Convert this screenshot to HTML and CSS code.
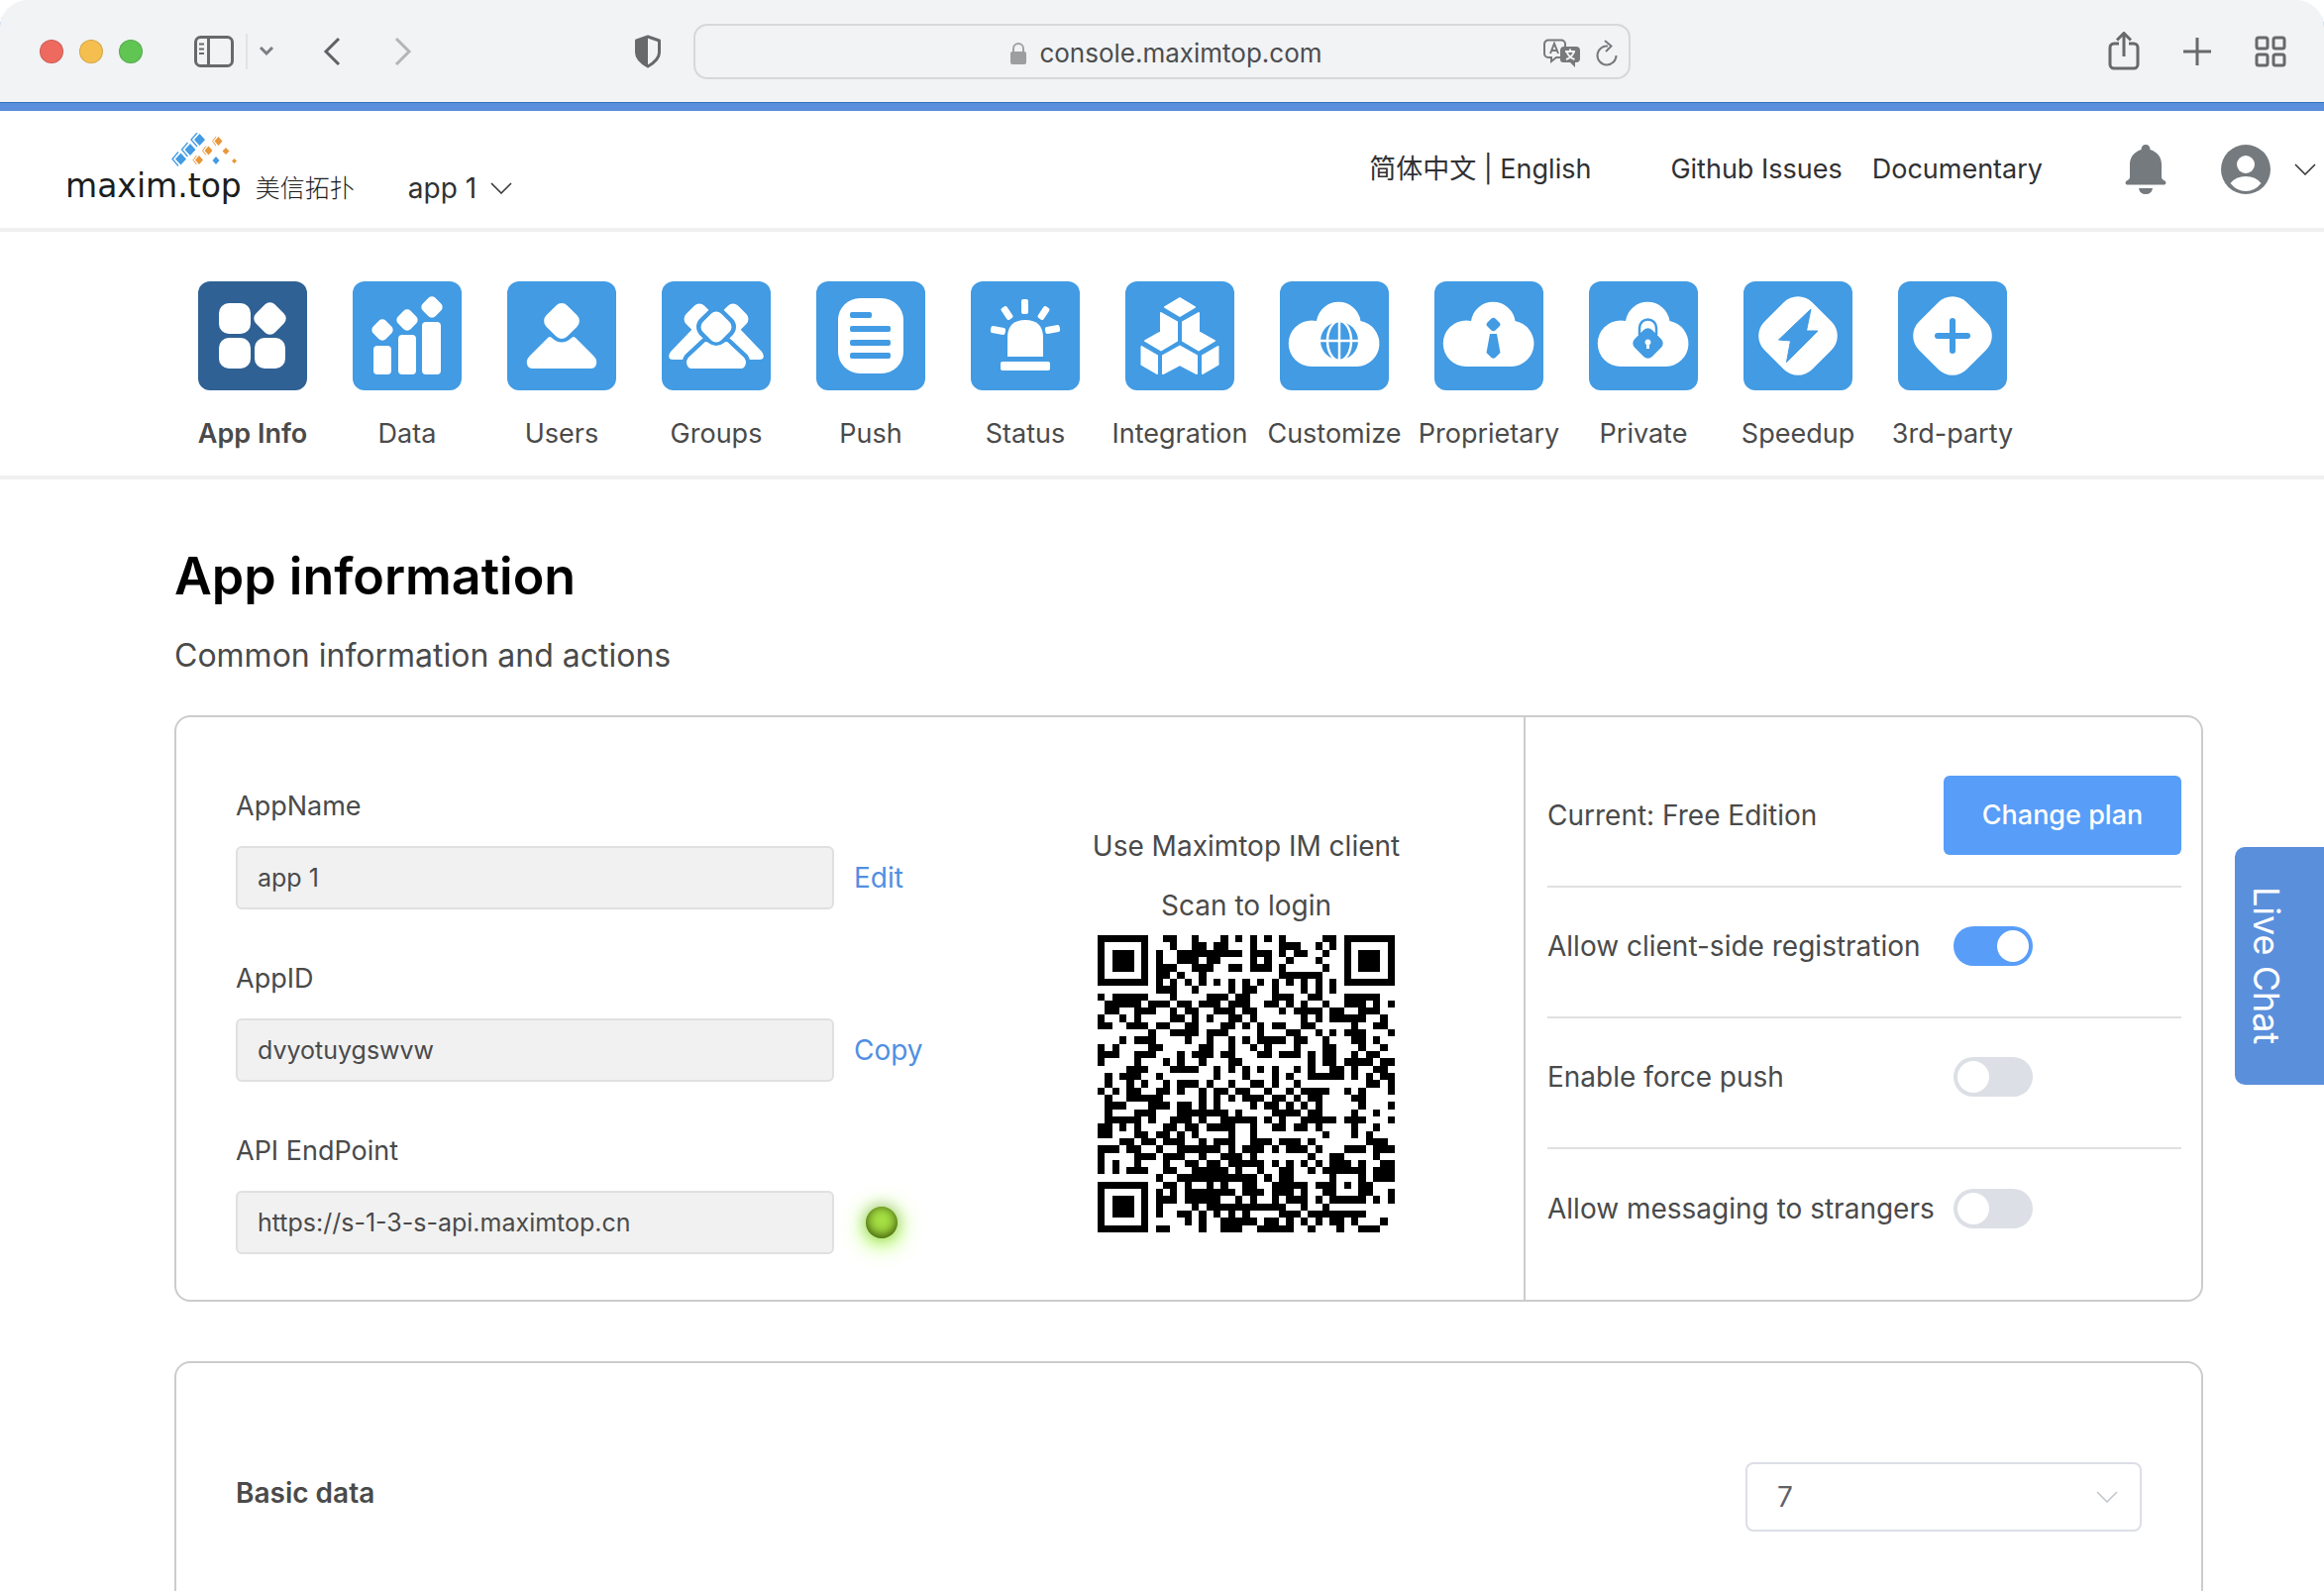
FILE: index.html
```html
<!DOCTYPE html>
<html lang="en">
<head>
<meta charset="utf-8">
<title>App information</title>
<link rel="stylesheet" href="styles.css">
</head>
<body>
<svg class="defs" aria-hidden="true">
  <symbol id="chevron" viewBox="0 0 22 12"><path d="M1 1l10 10L21 1" fill="none" stroke="currentColor" stroke-width="1.500"/></symbol>
  <symbol id="cloud" viewBox="0 0 110 110"><path fill="#fff" d="M32 86a23 23 0 0 1 0-46.500q3 0 5 .5a22.500 22.500 0 0 1 44.500 0a23.200 23.200 0 0 1-3.500 46z"/></symbol>
</svg>

<div class="chrome">
  <div class="chrome-left">
    <div class="lights"><i class="light red"></i><i class="light yellow"></i><i class="light green"></i></div>
    <button class="tool sidebar-btn" aria-label="Sidebar"><svg width="40" height="32" viewBox="0 0 40 32" fill="none" stroke="#67696b" stroke-width="3"><rect x="1.500" y="1.500" width="37" height="29" rx="5"/><path d="M14.500 2v28"/><path d="M5 8.500h5M5 13.500h5M5 18h5" stroke-width="2"/></svg></button>
    <button class="tool drop-btn" aria-label="Tab groups"><svg width="14" height="10" viewBox="0 0 14 10" fill="none" stroke="#7b7d80" stroke-width="3"><path d="M1 1l6 6 6-6"/></svg></button>
    <button class="tool back-btn" aria-label="Back"><svg width="18" height="30" viewBox="0 0 18 30" fill="none" stroke="#5f6163" stroke-width="3"><path d="M16 2L3 15l13 13"/></svg></button>
    <button class="tool" aria-label="Forward"><svg width="18" height="30" viewBox="0 0 18 30" fill="none" stroke="#b3b5b7" stroke-width="3"><path d="M2 2l13 13L2 28"/></svg></button>
    <button class="tool shield-btn" aria-label="Privacy report"><svg width="28" height="34" viewBox="0 0 28 34"><path d="M14 2L25.500 6V18c0 6-4.500 10-11.500 14C7 28 2.500 24 2.500 18V6z" fill="none" stroke="#67696b" stroke-width="3" stroke-linejoin="round"/><path d="M14 2v30C7 28 2.500 24 2.500 18V6z" fill="#67696b"/></svg></button>
  </div>
  <div class="url">
    <svg width="18" height="24" viewBox="0 0 18 24"><path d="M4 11V7a5 5 0 0 1 10 0v4" fill="none" stroke="#a0a2a4" stroke-width="2"/><rect x="1" y="10" width="16" height="13" rx="2" fill="#9c9ea0"/></svg>
    <span>console.maximtop.com</span>
    <div class="url-tools">
      <svg width="38" height="30" viewBox="0 0 38 30"><path d="M5 1.500h13a4 4 0 0 1 4 4V9M18 19h-5l-5 4v-4H5a4 4 0 0 1-4-4V5.500a4 4 0 0 1 4-4" fill="none" stroke="#77797b" stroke-width="2"/><path d="M7 15l4-10 4 10M8.500 12h5" fill="none" stroke="#77797b" stroke-width="2"/><path d="M20 8h13a4 4 0 0 1 4 4v8a4 4 0 0 1-4 4h-1v5l-5-5h-7a3 3 0 0 1-3-3V12a4 4 0 0 1 3-4z" fill="#77797b"/><path d="M22 13h10M27 10.500V13M31 13q-2 6-8 8M23.500 13q2 6 8 8" fill="none" stroke="#f1f3f5" stroke-width="2"/></svg>
      <svg width="24" height="28" viewBox="0 0 24 28" fill="none" stroke="#77797b" stroke-width="2"><path d="M13 6.500A9.500 9.500 0 1 0 21.500 16M10 1l6.500 5.500L11 12"/></svg>
    </div>
  </div>
  <div class="chrome-right">
    <button class="tool" aria-label="Share"><svg width="32" height="40" viewBox="0 0 32 40" fill="none" stroke="#67696b" stroke-width="3"><path d="M11 12H6a4 4 0 0 0-4 4v17a4 4 0 0 0 4 4h20a4 4 0 0 0 4-4V16a4 4 0 0 0-4-4h-5M16 25V2M9 8.500L16 1.500l7 7"/></svg></button>
    <button class="tool" aria-label="New tab"><svg width="28" height="28" viewBox="0 0 28 28" stroke="#67696b" stroke-width="3"><path d="M14 0v28M0 14h28"/></svg></button>
    <button class="tool" aria-label="Tab overview"><svg width="32" height="32" viewBox="0 0 32 32" fill="none" stroke="#67696b" stroke-width="3"><rect x="2" y="2" width="11" height="11" rx="2"/><rect x="19" y="2" width="11" height="11" rx="2"/><rect x="2" y="19" width="11" height="11" rx="2"/><rect x="19" y="19" width="11" height="11" rx="2"/></svg></button>
  </div>
</div>

<header class="header">
  <a class="logo" href="#">
    <svg class="logo-mark" width="72" height="34" viewBox="0 0 72 34">
      <g fill="#429be3"><path d="M29.500 1l5.500 6-5.500 6-5.500-6zM20 11l5.500 6-5.500 6-5.500-6zM10.500 20.500l5.500 6-5.500 6-5.500-6zM46 24l3.500 4-3.500 4-3.500-4z"/></g>
      <g fill="none" stroke="#429be3" stroke-width="1.300"><path d="M27 0l-6 7 6 7M17.500 10l-6 7 6 7M8 19.500l-6 7 6 7"/></g>
      <g fill="#e8973a"><path d="M48.500 4l4 4.500-4 4.500-4-4.500zM38.500 13.500l4 4.500-4 4.500-4-4.500zM29 23l4 4.500-4 4.500-4-4.500zM56 15l3.500 3.500L56 22l-3.500-3.500zM64.500 26l2.500 2.500-2.500 2.500-2.500-2.500z"/></g>
      <g fill="none" stroke="#e8973a"><path d="M46 4l-3.500 4.500L46 13M36 13.500L32.500 18l3.500 4.500M26.500 23L23 27.500l3.500 4.500"/></g>
    </svg>
    <span class="logo-name">maxim.top</span>
    <span class="logo-cn" lang="zh">美信拓扑</span>
  </a>
  <button class="app-switch">app 1<svg width="22" height="12"><use href="#chevron"/></svg></button>
  <nav class="header-links">
    <span class="langs"><a href="#" lang="zh">简体中文</a> | <a href="#">English</a></span>
    <a href="#">Github Issues</a>
    <a class="doc" href="#">Documentary</a>
    <button class="plain bell" aria-label="Notifications"><svg width="44" height="50" viewBox="0 0 44 50" fill="#757a7e"><path d="M22 0c3 0 4.500 2 4.500 5C34 7.500 38 13 38 20v13q0 2 4 4 1 3-1 3.500H3q-2-.5-1-3.500 4-2 4-4V20C6 13 10 7.500 17.500 5c0-3 1.500-5 4.500-5zM15 44h14q-1 6-7 6t-7-6z"/></svg></button>
    <button class="plain account" aria-label="Account"><svg width="50" height="50" viewBox="0 0 50 50"><circle cx="25" cy="25" r="25" fill="#757a7e"/><circle cx="25" cy="20" r="9" fill="#fff"/><path d="M9.500 39Q15 32 25 32t15.500 7Q34 47 25 47T9.500 39z" fill="#fff"/></svg><svg width="22" height="12"><use href="#chevron"/></svg></button>
  </nav>
</header>

<nav class="modules">
  <a class="module active" href="#"><svg viewBox="0 0 110 110" fill="#fff"><rect x="21" y="22" width="32" height="31" rx="10"/><rect x="21" y="57" width="32" height="31" rx="10"/><rect x="57" y="57" width="31" height="31" rx="10"/><rect x="59" y="24" width="27" height="27" rx="7" transform="rotate(45 72.500 37.500)"/></svg><span>App Info</span></a>
  <a class="module" href="#"><svg viewBox="0 0 110 110" fill="#fff"><rect x="21" y="65" width="18" height="29" rx="4"/><rect x="46" y="54" width="18" height="40" rx="4"/><rect x="70" y="41" width="19" height="53" rx="4"/><rect x="21" y="40" width="18" height="18" rx="5" transform="rotate(45 30 49)"/><rect x="46" y="30" width="18" height="18" rx="5" transform="rotate(45 55 39)"/><rect x="71" y="17" width="18" height="18" rx="5" transform="rotate(45 80 26)"/></svg><span>Data</span></a>
  <a class="module" href="#"><svg viewBox="0 0 110 110" fill="#fff"><rect x="40" y="25" width="30" height="30" rx="8" transform="rotate(45 55 40)"/><path d="M41 57q2-2 4 0 10 9 20 0 2-2 4 0l18.500 18.500q3.500 4 2.500 8-1 4.500-6 4.500H26q-5 0-6-4.500-1-4 2.500-8z"/></svg><span>Users</span></a>
  <a class="module" href="#"><svg viewBox="0 0 110 110" fill="#fff"><path d="M31 48L9 71q-3 4-1 7 1 1 4 1h33l15-29zM79 48l22 23q3 4 1 7-1 1-4 1H65L50 50z"/><rect x="25" y="25" width="26" height="26" rx="7" transform="rotate(45 38 38)"/><rect x="59" y="25" width="26" height="26" rx="7" transform="rotate(45 72 38)"/><g stroke="#429be3" stroke-width="9" paint-order="stroke"><path d="M43 62q2-2 4 0 8 6 16 0 2-2 4 0l16 15q3 4 1 8-1 3-5 3H31q-4 0-5-3-2-4 1-8z"/><rect x="42" y="33" width="26" height="26" rx="7" transform="rotate(45 55 46)"/></g><path d="M43 62q2-2 4 0 8 6 16 0 2-2 4 0l16 15q3 4 1 8-1 3-5 3H31q-4 0-5-3-2-4 1-8z"/></svg><span>Groups</span></a>
  <a class="module" href="#"><svg viewBox="0 0 110 110" fill="#fff"><rect x="22" y="17" width="66" height="76" rx="22"/><g fill="#429be3"><rect x="34" y="31" width="22" height="6" rx="2"/><rect x="34" y="45" width="41" height="6" rx="2"/><rect x="34" y="59" width="41" height="6" rx="2"/><rect x="34" y="72" width="41" height="6" rx="2"/></g></svg><span>Push</span></a>
  <a class="module" href="#"><svg viewBox="0 0 110 110" fill="#fff"><rect x="30" y="81" width="50" height="9" rx="2"/><path d="M37 76V57q0-18 18-18t18 18v19z"/><rect x="51" y="18" width="7" height="15" rx="2"/><rect x="33" y="25" width="7" height="14" rx="2" transform="rotate(-33 36.500 32)"/><rect x="70" y="25" width="7" height="14" rx="2" transform="rotate(33 73.500 32)"/><rect x="20" y="46" width="15" height="7" rx="2" transform="rotate(10 27.500 49.500)"/><rect x="75" y="45" width="15" height="7" rx="2" transform="rotate(-10 82.500 48.500)"/></svg><span>Status</span></a>
  <a class="module" href="#"><svg viewBox="0 0 110 110" fill="#fff" stroke="#fff" stroke-width="2" stroke-linejoin="round"><path d="M55 17l15 9-15 9-15-9zM36 32l16 9v19l-16 9.500L20 60l16-9zM74 32l-16 9v19l16 9.500L90 60l-16-9zM16.500 66L32 75v18l-15.500-9zM93.500 66L78 75v18l15.500-9zM38 75l17-9.500L72 75v18l-17-9-17 9z"/></svg><span>Integration</span></a>
  <a class="module" href="#"><svg viewBox="0 0 110 110"><use href="#cloud"/><circle cx="60" cy="60" r="19" fill="#429be3"/><g fill="none" stroke="#fff" stroke-width="2.500"><ellipse cx="60" cy="60" rx="12" ry="20"/><path d="M60 40v40M40 60h40"/></g></svg><span>Customize</span></a>
  <a class="module" href="#"><svg viewBox="0 0 110 110"><use href="#cloud"/><path fill="#429be3" d="M57.500 37.500q2-1.500 4 0l4 4q2 2 0 4l-4 4q-2 1.500-4 0l-4-4q-2-2 0-4zM56 53h7l3.500 19-5 5q-2 1.500-4 0l-5-5z"/></svg><span>Proprietary</span></a>
  <a class="module" href="#"><svg viewBox="0 0 110 110"><use href="#cloud"/><path fill="none" stroke="#429be3" stroke-width="2.500" d="M51 54v-7a8.500 8.500 0 0 1 17 0v7"/><rect x="47" y="50" width="25" height="25" rx="6" transform="rotate(45 59.500 62.500)" fill="#429be3"/><path fill="#fff" d="M58 64a3 3 0 1 1 3 0v4h-3z"/></svg><span>Private</span></a>
  <a class="module" href="#"><svg viewBox="0 0 110 110"><rect x="21" y="21" width="68" height="68" rx="20" transform="rotate(45 55 55)" fill="#fff"/><path fill="#429be3" stroke="#429be3" stroke-linejoin="round" d="M68 28l-4.500 22H75L43.500 81.500 47.500 60 35.500 59z"/></svg><span>Speedup</span></a>
  <a class="module" href="#"><svg viewBox="0 0 110 110"><rect x="21" y="21" width="68" height="68" rx="20" transform="rotate(45 55 55)" fill="#fff"/><path stroke="#429be3" stroke-width="6" stroke-linecap="round" d="M55 40v30M40 55h30"/></svg><span>3rd-party</span></a>
</nav>

<main class="content">
  <h1>App information</h1>
  <p class="lead">Common information and actions</p>

  <section class="card info">
    <div class="fields">
      <div class="field">
        <label for="app-name">AppName</label>
        <div class="field-row"><input id="app-name" type="text" value="app 1" readonly><a href="#">Edit</a></div>
      </div>
      <div class="field">
        <label for="app-id">AppID</label>
        <div class="field-row"><input id="app-id" type="text" value="dvyotuygswvw" readonly><a href="#">Copy</a></div>
      </div>
      <div class="field">
        <label for="endpoint">API EndPoint</label>
        <div class="field-row"><input id="endpoint" type="text" value="https://s-1-3-s-api.maximtop.cn" readonly><i class="status-dot"></i></div>
      </div>
    </div>
    <div class="scan">
      <p>Use Maximtop IM client</p>
      <p>Scan to login</p>
      <svg class="qr" viewBox="0 0 41 41" shape-rendering="crispEdges" role="img" aria-label="Login QR code"><path id="qr-path"/></svg>
    </div>
    <div class="settings">
      <div class="setting plan"><span>Current: Free Edition</span><button class="primary">Change plan</button></div>
      <div class="setting"><label for="reg">Allow client-side registration</label><input class="switch" id="reg" type="checkbox" checked></div>
      <div class="setting"><label for="force">Enable force push</label><input class="switch" id="force" type="checkbox"></div>
      <div class="setting"><label for="strangers">Allow messaging to strangers</label><input class="switch" id="strangers" type="checkbox"></div>
    </div>
  </section>

  <section class="card basic">
    <label for="days">Basic data</label>
    <div class="select-wrap">
      <select id="days"><option>7</option><option>15</option><option>30</option></select>
      <svg width="22" height="12"><use href="#chevron"/></svg>
    </div>
  </section>
</main>

<button class="live-chat">Live Chat</button>
<script src="qr.js"></script>
</body>
</html>
```

FILE: styles.css
```css
* { box-sizing: border-box; }

html { background: #fff; }

body {
  margin: 0;
  height: 100vh;
  overflow: hidden;
  font-family: Inter, "Noto Sans CJK SC", sans-serif;
  font-size: 28px;
  line-height: 40px;
  color: #4a4a4a;
}

button, input, select { font: inherit; color: inherit; }
button { padding: 0; border: 0; background: none; display: flex; align-items: center; cursor: pointer; }
a { color: inherit; text-decoration: none; }
svg { display: block; flex: none; }
p, h1 { margin: 0; }
.defs { display: none; }

/* Browser toolbar */
.chrome {
  display: grid;
  grid-template-columns: minmax(0, 1fr) minmax(0, 946px) minmax(0, 1fr);
  align-items: center;
  height: 112px;
  background: #f1f3f5;
  border-bottom: 8px solid #5a8fdc;
  border-radius: 28px 28px 0 0;
  box-shadow: inset 0 -1px #2f6fbd;
}
.chrome-left { display: flex; align-items: center; padding: 0 32px 0 40px; }
.lights { display: flex; gap: 16px; }
.light { width: 24px; height: 24px; border-radius: 50%; border: 1px solid #0002; }
.red { background: #ee6a5f; }
.yellow { background: #f5bf4f; }
.green { background: #61c554; }
.sidebar-btn { margin-left: 52px; }
.drop-btn { margin-left: 12px; padding-left: 12px; height: 36px; border-left: 2px solid #e1e3e5; }
.back-btn { margin: 0 54px 0 50px; }
.shield-btn { margin-left: auto; }
.url {
  display: flex;
  align-items: center;
  justify-content: center;
  gap: 12px;
  height: 56px;
  padding: 4px 0 0 8px;
  position: relative;
  border: 2px solid #d5d7d9;
  border-radius: 14px;
  font-size: 26px;
  color: #4c4d4f;
}
.url-tools { position: absolute; right: 10px; display: flex; align-items: center; gap: 14px; }
.chrome-right { display: flex; align-items: center; justify-content: flex-end; gap: 44px; padding-right: 38px; }

/* Site header */
.header {
  display: flex;
  align-items: center;
  height: 122px;
  padding: 0 8px 0 66px;
  border-bottom: 4px solid #f0f0f0;
  color: #303133;
}
.logo {
  display: grid;
  grid-template-columns: auto auto;
  column-gap: 14px;
  align-items: center;
  color: #1d1d1d;
}
.logo-mark { grid-column: 1 / 3; margin-left: 106px; }
.logo-name { font: 33px/40px "DejaVu Sans", sans-serif; }
.logo-cn { font: 300 25px/40px "Noto Sans CJK SC", sans-serif; }
.app-switch { gap: 14px; margin: 38px 0 0 54px; }
.header-links { display: flex; align-items: center; margin-left: auto; font-size: 27px; }
.langs { margin-right: 80px; }
.doc { margin-left: 30px; }
.bell { margin-left: 82px; }
.account { margin-left: 54px; gap: 24px; }

/* Module tiles */
.modules {
  display: flex;
  padding: 50px 177px 22px;
  border-bottom: 4px solid #f0f0f0;
}
.module {
  flex: 0 0 156px;
  display: flex;
  flex-direction: column;
  align-items: center;
  gap: 24px;
  font-size: 27px;
  white-space: nowrap;
}
.module svg { width: 110px; height: 110px; border-radius: 12px; background: #429be3; }
.module.active svg { background: #2f6195; }
.active span { font-weight: 600; }

/* Page */
.content { padding: 62px 122px 0 176px; }
h1 { font-size: 52px; font-weight: 600; line-height: 72px; color: #000; }
.lead { margin-top: 20px; font-size: 32px; line-height: 48px; }
.card { border: 2px solid #ccc; border-radius: 16px; }
.info {
  display: grid;
  grid-template-columns: 800px minmax(0, 1fr) 684px;
  margin-top: 36px;
}
.fields { display: flex; flex-direction: column; gap: 50px; padding: 70px 0 46px 60px; }
.field { display: flex; flex-direction: column; gap: 20px; }
.field label { font-size: 27px; }
.field-row { display: flex; align-items: center; gap: 20px; height: 64px; }
.field-row input {
  width: 604px;
  height: 64px;
  padding: 0 20px;
  border: 2px solid #e0e0e0;
  border-radius: 6px;
  background: #f1f1f1;
  font-size: 25px;
  outline: 0;
}
.field-row a { color: #508fe2; }
.status-dot {
  width: 32px;
  height: 32px;
  margin-left: 12px;
  border-radius: 50%;
  background: #a6e044;
  box-shadow: 0 -1px 14px 1px #0003, inset 0 -2px 12px #304701, 0 4px 24px #89ff00;
}
.scan { display: flex; flex-direction: column; align-items: center; padding-top: 100px; line-height: 60px; }
.qr { width: 300px; height: 300px; }
.settings { padding: 40px 20px 0 22px; border-left: 2px solid #ccc; }
.setting { display: flex; align-items: center; height: 132px; padding-bottom: 12px; border-bottom: 2px solid #e0e0e0; }
.setting:last-child { border: 0; }
.setting label { width: 410px; }
.setting.plan { justify-content: space-between; }
.primary {
  justify-content: center;
  width: 240px;
  height: 80px;
  border-radius: 6px;
  background: #589df8;
  color: #fff;
  font-size: 27px;
  font-weight: 500;
}
.switch {
  appearance: none;
  width: 80px;
  height: 40px;
  margin: 0;
  padding: 4px;
  border-radius: 20px;
  background: #dcdfe6;
}
.switch::before { content: ""; display: block; width: 32px; height: 32px; border-radius: 50%; background: #fff; }
.switch:checked { background: #589df8; }
.switch:checked::before { margin-left: auto; }

.basic {
  display: flex;
  justify-content: space-between;
  align-items: center;
  margin-top: 60px;
  padding: 100px 60px;
}
.basic label { padding-bottom: 8px; font-weight: 600; }
.select-wrap { display: grid; align-items: center; width: 400px; }
.select-wrap select {
  grid-area: 1 / 1;
  appearance: none;
  height: 70px;
  padding: 0 30px;
  border: 2px solid #dcdfe6;
  border-radius: 8px;
  background: #fff;
  color: #606266;
}
.select-wrap svg { grid-area: 1 / 1; justify-self: end; margin-right: 24px; color: #c0c4cc; pointer-events: none; }

.live-chat {
  position: fixed;
  right: 0;
  top: 855px;
  width: 90px;
  height: 240px;
  justify-content: center;
  padding-right: 26px;
  border-radius: 10px 0 0 10px;
  background: #5a8fdc;
  color: #fff;
  font-size: 36px;
  writing-mode: vertical-rl;
}
```

FILE: qr.js
```js
// Dark module runs of the login code, one string per row.
const rows = [
  "0-6 9-10 13 17 19 21 23 25 31-32 34-40",
  "0 6 10 13-14 16-17 21 25-27 30 32 34 40",
  "0 2-4 6 8 11-19 21-23 25 27-28 31 34 36-38 40",
  "0 2-4 6 8 11-13 15-16 21 23 26 30 34 36-38 40",
  "0 2-4 6 8-10 13-15 18-19 21-23 25 31 34 36-38 40",
  "0 6 8-9 11 14 25-30 34 40",
  "0-6 8 10 12 14 16 18 20 22 24 26 28 30 32 34-40",
  "8-10 13 18 20-21 24 28 30 32",
  "0 2-6 10 15-17 19-20 24-26 29-30 34-38",
  "1-5 7-9 11-12 14-16 18-20 23-24 26 28 31 34-36 38 40",
  "1-2 5-7 10 12-13 16-18 20-21 25 27-30 32-33 36-38",
  "0 3 5 10-11 13 15 18-19 21 28 30 32-36 39",
  "0-1 4-6 8-9 12-13 17-18 20 22 24-25 28-29 35 38-39",
  "7 10-13 15-17 22 26-27 30 32 34-36 40",
  "3 5-7 12 15 18 20 22-25 27-28 31 35-36 38",
  "0 2 7-8 14-15 18 21 23 27 31-32 36 39",
  "0-2 5-7 11 13-15 17-18 22-23 25-27 29 31-32 35 37-38",
  "0 5 9 11 14 18-19 29 31-32 34-37 39-40",
  "4-6 10-13 16 18 20 22 24 27 29 32-33 35 38-39",
  "1 3-5 8 16 20 24 26 29-33 35 37 39-40",
  "1 4 6 9 11-13 15 18 21-22 24 27 37-38 40",
  "0 2 4-5 8-9 11 14 16-17 19-20 23 26 28-31 34 36 40",
  "1 4-8 14 16 18 20-22 24-25 27 29-30 35-36",
  "1-3 7-9 11-12 14 16 21 23-24 26 28 30 36 40",
  "1 5-7 11-17 19 24-27 29-30 35 38",
  "1-5 7 10-12 14 17-21 23 25 28-32 34-36 40",
  "0-1 3 5 9-10 12-13 15-18 21 24-25 27-28 30 35 38",
  "0-1 5-6 8-9 11 13 18 21 31 35 37",
  "3-4 6-7 9-11 14 16-18 21-23 25-27 29 37-39",
  "0-2 4-5 8 11-16 18 20-22 24 26-28 30 34-36 38-40",
  "0 5-7 9-11 14 17-19 21 29 32-33 38",
  "0 2 5 9 12-13 15-16 18-22 24 26 28 30 32-34 36 39-40",
  "0 2 4-6 9-10 13-17 19 22 25-26 29 31-36 38-40",
  "8 11-21 23 25-26 32 36 38-40",
  "0-6 9-10 12 15 17 20-21 24-28 30-32 34 36-37",
  "0 6 8 10 12-18 20-22 24-26 28 31-32 36-37 40",
  "0 2-4 6 8-10 12-16 19 21 24 26-28 30 32-36 38 40",
  "0 2-4 6 8 13 15-25 28 31",
  "0 2-4 6 8 11-12 14 16 18 20 25-27 29-36",
  "0 6 12 14 17-21 23-24 26 28 30 32-33 35 39",
  "0-6 8-9 14 17-19 22-26 29 33 36-38"
];

const d = rows.map((row, y) => row.split(" ").map(run => {
  const [from, to = from] = run.split("-").map(Number);
  const w = to - from + 1;
  return `M${from} ${y}h${w}v1h-${w}z`;
}).join("")).join("");

document.getElementById("qr-path").setAttribute("d", d);
```
